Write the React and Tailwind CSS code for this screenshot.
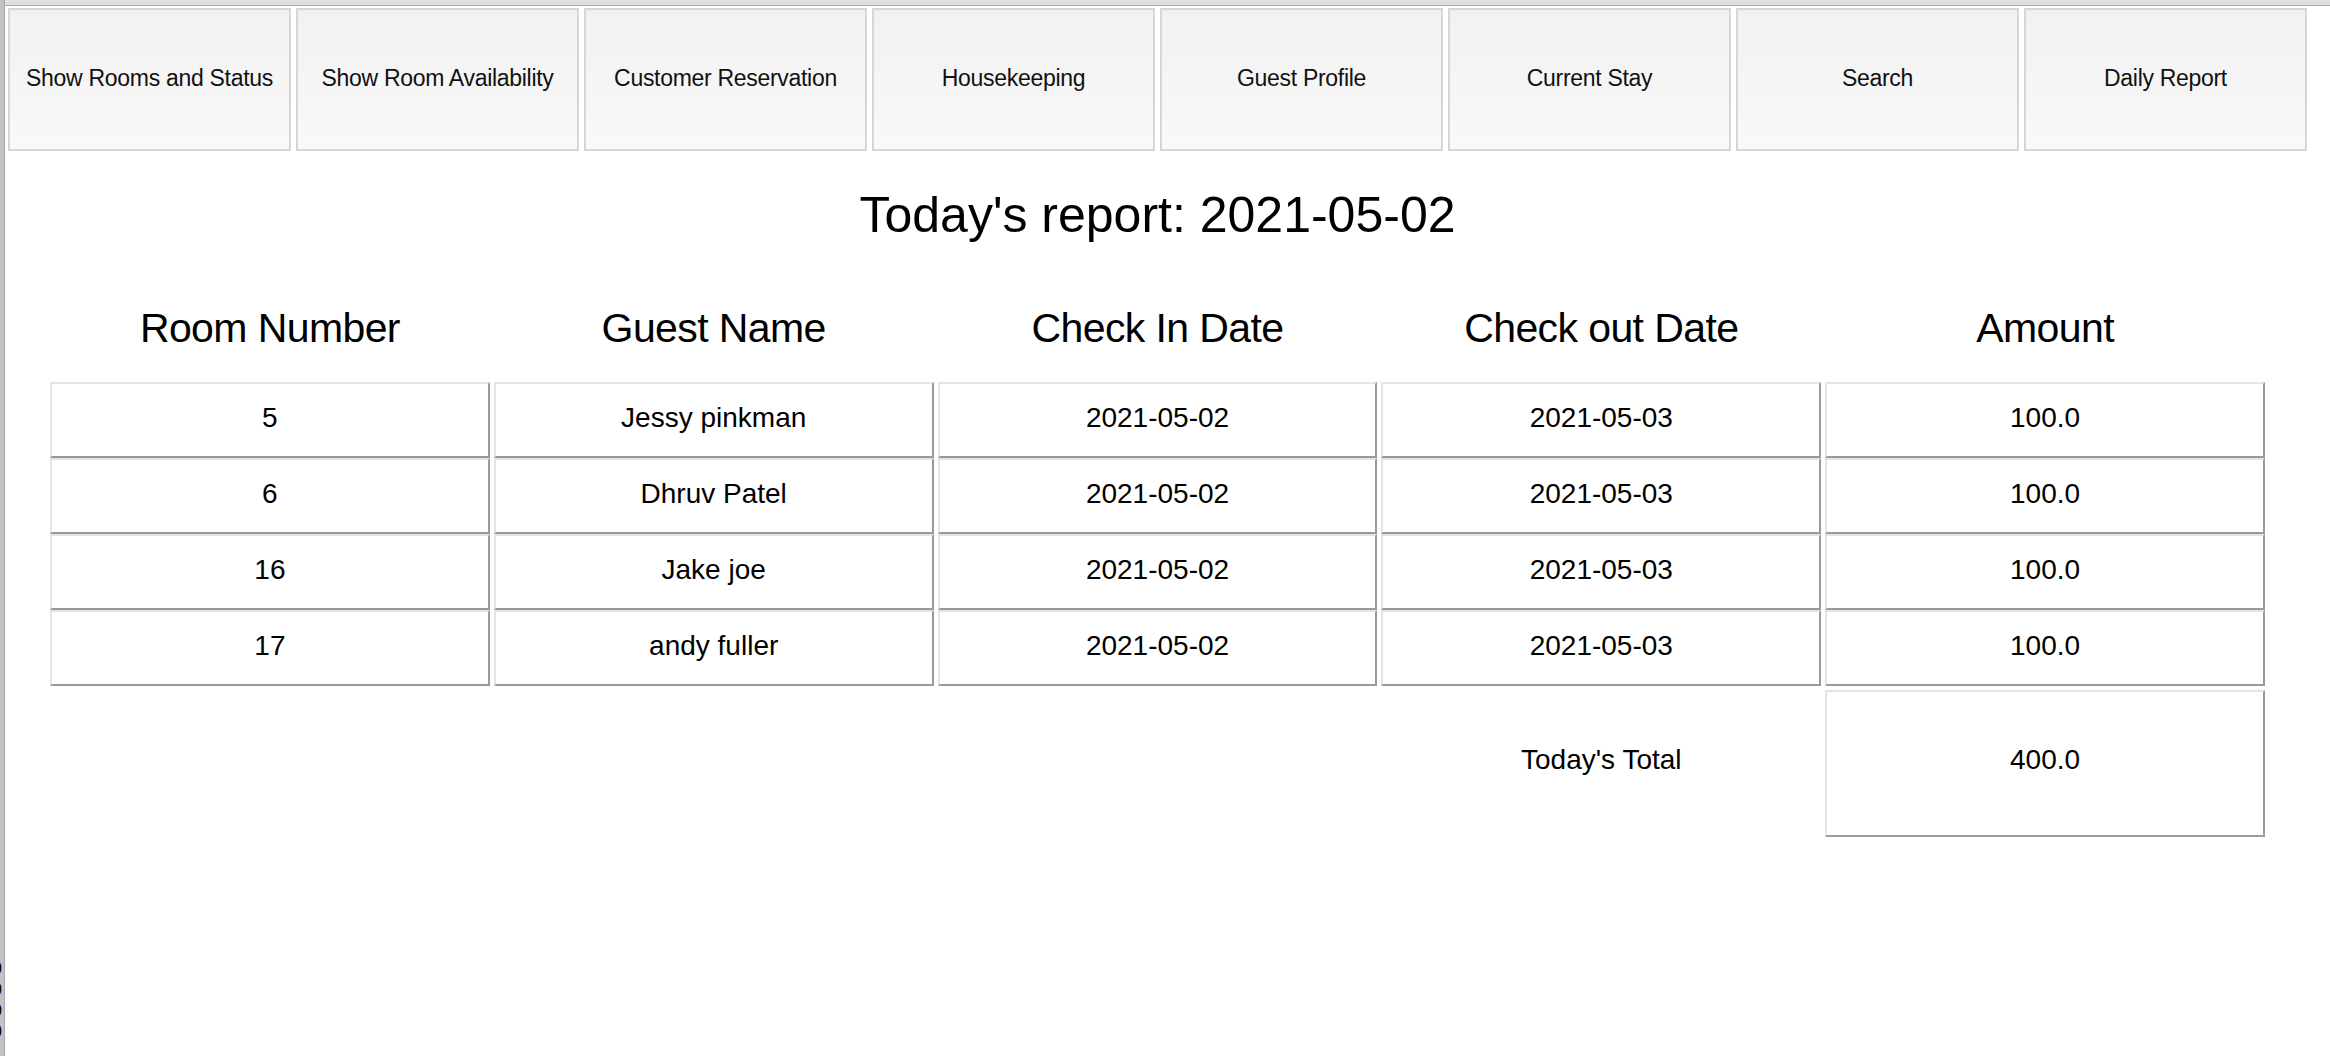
const tabs = [
  'Show Rooms and Status',
  'Show Room Availability',
  'Customer Reservation',
  'Housekeeping',
  'Guest Profile',
  'Current Stay',
  'Search',
  'Daily Report',
]

const columns = ['Room Number', 'Guest Name', 'Check In Date', 'Check out Date', 'Amount']

const rows = [
  ['5', 'Jessy pinkman', '2021-05-02', '2021-05-03', '100.0'],
  ['6', 'Dhruv Patel', '2021-05-02', '2021-05-03', '100.0'],
  ['16', 'Jake joe', '2021-05-02', '2021-05-03', '100.0'],
  ['17', 'andy fuller', '2021-05-02', '2021-05-03', '100.0'],
]

function Cell({ children, tall }) {
  return (
    <div
      className={
        'flex items-center justify-center border-2 border-t-[#e4e4e4] border-l-[#e4e4e4] border-r-[#9a9a9a] border-b-[#9a9a9a] bg-white text-[28px] leading-none text-black ' +
        (tall ? 'h-[147px] pb-[8px]' : 'h-[76px] pb-[4px]')
      }
    >
      {children}
    </div>
  )
}

export default function App() {
  return (
    <div className="flex h-screen w-full overflow-hidden bg-white font-['Liberation_Sans',Arial,sans-serif]">
      {/* window edge on the left, with the clipped digits of the window behind */}
      <div className="flex w-[5px] shrink-0 flex-col justify-end overflow-hidden border-r border-[#a6a6a6] bg-[#c2c2c2] pb-[14px]">
        {[0, 1, 2, 3].map((i) => (
          <div key={i} className="-ml-[7px] text-[16px] leading-[21px] text-black">0</div>
        ))}
      </div>

      <div className="flex flex-1 flex-col">
        <div className="h-[6px] border-b border-[#a9a9a9] bg-[#dedede]" />

        <div className="ml-[3px] mt-[2px] w-[2299px]">
          <div className="flex gap-[5px]">
            {tabs.map((t) => (
              <button
                key={t}
                className="flex h-[143px] w-[283px] items-center justify-center border-2 border-[#d6d6d6] bg-gradient-to-b from-[#f1f1f1] to-[#f9f9f9] pb-[3px] text-[23px] tracking-[-0.3px] text-[#111]"
              >
                {t}
              </button>
            ))}
          </div>

          <h1 className="mt-[39px] text-center text-[50px] leading-none text-black">Today's report: 2021-05-02</h1>

          <div className="mx-[42px] mt-[68px]">
            <div className="grid grid-cols-5 gap-x-[4px]">
              {columns.map((c) => (
                <div key={c} className="text-center text-[41px] leading-[40px] tracking-[-0.6px] text-black">
                  {c}
                </div>
              ))}
            </div>

            <div className="mt-[34px] grid grid-cols-5 gap-x-[4px]">
              {rows.map((r) => r.map((v, j) => <Cell key={r[0] + '-' + j}>{v}</Cell>))}
            </div>

            <div className="mt-[4px] grid grid-cols-5 gap-x-[4px]">
              <div />
              <div />
              <div />
              <div className="flex h-[147px] items-center justify-center pb-[8px] text-[28px] leading-none text-black">
                Today's Total
              </div>
              <Cell tall>400.0</Cell>
            </div>
          </div>
        </div>
      </div>
    </div>
  )
}
